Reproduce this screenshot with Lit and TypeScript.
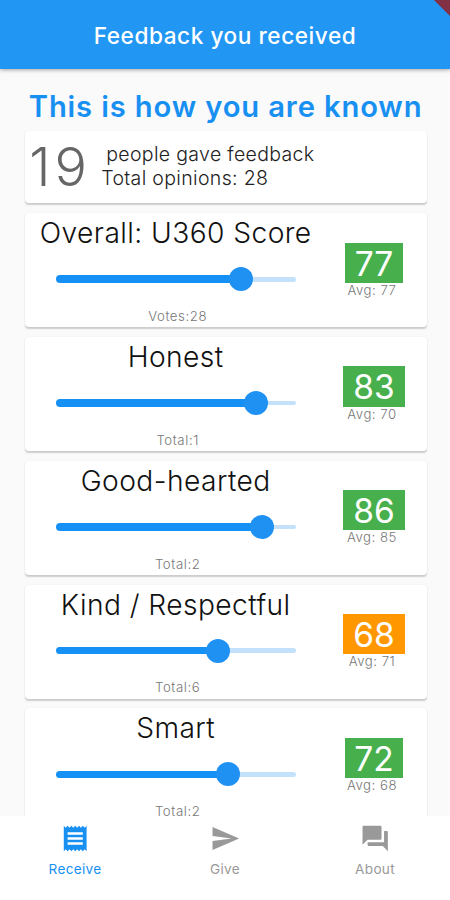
import { LitElement, html, css, svg } from "lit";
import { customElement, property } from "lit/decorators.js";
import { styleMap } from "lit/directives/style-map.js";

interface Score {
  name: string;
  value: number;
  pos: number;
  avg: number;
  votes: string;
  badge: number;
  color: string;
}

const GREEN = "#47af4c";
const ORANGE = "#ff9800";

const scores: Score[] = [
  { name: "Overall: U360 Score", value: 77, pos: 77, avg: 77, votes: "Votes:28", badge: 57.5, color: GREEN },
  { name: "Honest", value: 83, pos: 83.2, avg: 70, votes: "Total:1", badge: 61.7, color: GREEN },
  { name: "Good-hearted", value: 86, pos: 85.8, avg: 85, votes: "Total:2", badge: 61.7, color: GREEN },
  { name: "Kind / Respectful", value: 68, pos: 67.4, avg: 71, votes: "Total:6", badge: 61.7, color: ORANGE },
  { name: "Smart", value: 72, pos: 71.7, avg: 68, votes: "Total:2", badge: 58.3, color: GREEN },
];

@customElement("score-card")
export class ScoreCard extends LitElement {
  @property({ attribute: false }) score!: Score;

  static styles = css`
    :host {
      display: flex;
      flex: none;
      height: 114px;
      background: #fff;
      border-radius: 4px;
      box-shadow: 0 1.2px 1.5px rgba(0, 0, 0, 0.18), 0 0 1.5px rgba(0, 0, 0, 0.05);
      font-family: Inter, "Liberation Sans", sans-serif;
    }
    .main {
      width: 303px;
      display: flex;
      flex-direction: column;
      align-items: center;
    }
    .name {
      height: 40px;
      margin-right: 1px;
      line-height: 41px;
      font-size: 28.2px;
      font-weight: 330;
      letter-spacing: 0.42px;
      color: #111;
      white-space: nowrap;
    }
    .slider {
      display: flex;
      align-items: center;
      width: 240px;
      height: 24px;
      margin-top: 14px;
    }
    .active {
      height: 7.6px;
      border-radius: 4px 0 0 4px;
      background: #1590f5;
    }
    .thumb {
      flex: none;
      width: 24px;
      height: 24px;
      margin: 0 -12px;
      border-radius: 50%;
      background: #1f91f3;
      z-index: 1;
    }
    .rest {
      flex: 1;
      height: 4.6px;
      border-radius: 0 3px 3px 0;
      background: #c3e1fb;
    }
    .votes {
      margin: 16.7px 0 0 3px;
      line-height: 16px;
      font-size: 13.2px;
      font-weight: 300;
      letter-spacing: 0.6px;
      color: #777;
    }
    .side {
      width: 92.6px;
      display: flex;
      flex-direction: column;
      align-items: center;
      padding-top: 29.3px;
    }
    .badge {
      height: 40.2px;
      line-height: 42px;
      text-align: center;
      font-size: 33.5px;
      color: #fff;
    }
    .avg {
      margin-right: 4px;
      line-height: 15.5px;
      font-size: 13.2px;
      font-weight: 300;
      letter-spacing: 0.5px;
      color: #777;
      white-space: nowrap;
    }
  `;

  render() {
    const s = this.score;
    return html`
      <div class="main">
        <div class="name">${s.name}</div>
        <div class="slider">
          <div class="active" style=${styleMap({ width: `${s.pos}%` })}></div>
          <div class="thumb"></div>
          <div class="rest"></div>
        </div>
        <div class="votes">${s.votes}</div>
      </div>
      <div class="side">
        <div class="badge" style=${styleMap({ width: `${s.badge}px`, background: s.color })}>${s.value}</div>
        <div class="avg">Avg: ${s.avg}</div>
      </div>
    `;
  }
}

const tabs = [
  {
    label: "Receive",
    active: true,
    icon: svg`<path d="M18 17H6v-2h12v2zm0-4H6v-2h12v2zm0-4H6V7h12v2zM3 22l1.5-1.5L6 22l1.5-1.5L9 22l1.5-1.5L12 22l1.5-1.5L15 22l1.5-1.5L18 22l1.5-1.5L21 22V2l-1.5 1.5L18 2l-1.5 1.5L15 2l-1.5 1.5L12 2l-1.5 1.5L9 2 7.5 3.5 6 2 4.5 3.5 3 2v20z"/>`,
  },
  { label: "Give", active: false, icon: svg`<path d="M2.01 21 23 12 2.01 3 2 10l15 2-15 2z"/>` },
  {
    label: "About",
    active: false,
    icon: svg`<path d="M21 6h-2v9H6v2c0 .55.45 1 1 1h11l4 4V7c0-.55-.45-1-1-1zm-4 6V3c0-.55-.45-1-1-1H3c-.55 0-1 .45-1 1v14l4-4h10c.55 0 1-.45 1-1z"/>`,
  },
];

@customElement("app-root")
export class AppRoot extends LitElement {
  static styles = css`
    :host {
      display: flex;
      flex-direction: column;
      position: relative;
      height: 900px;
      overflow: hidden;
      background: #fafafa;
      font-family: Inter, "Liberation Sans", sans-serif;
    }
    .bar {
      flex: none;
      height: 69px;
      line-height: 71px;
      background: #2296f3;
      box-shadow: 0 1px 4px rgba(0, 0, 0, 0.35);
      text-align: center;
      color: #fff;
      font-size: 22.6px;
      font-weight: 550;
      letter-spacing: 0.55px;
      white-space: nowrap;
      z-index: 1;
    }
    .ribbon {
      position: absolute;
      top: 0;
      right: 0;
      width: 24px;
      height: 24px;
      z-index: 2;
    }
    .content {
      flex: 1;
      min-height: 0;
      overflow: hidden;
      display: flex;
      flex-direction: column;
      gap: 9.8px;
      padding: 0 23.5px 0 24.7px;
    }
    .title {
      flex: none;
      margin: 0 -10px -9.8px;
      height: 61.8px;
      line-height: 75px;
      text-align: center;
      color: #1890f2;
      font-size: 29.2px;
      font-weight: 600;
      letter-spacing: 0.85px;
      white-space: nowrap;
    }
    .summary {
      flex: none;
      display: flex;
      height: 72.7px;
      background: #fff;
      border-radius: 4px;
      box-shadow: 0 1.2px 1.5px rgba(0, 0, 0, 0.18), 0 0 1.5px rgba(0, 0, 0, 0.05);
    }
    .count {
      width: 76.5px;
      padding-left: 4.5px;
      box-sizing: border-box;
      line-height: 72px;
      font-size: 54px;
      font-weight: 350;
      letter-spacing: 4px;
      color: #666;
    }
    .lines {
      padding-top: 11.7px;
      font-size: 19.5px;
      line-height: 24px;
      font-weight: 330;
      letter-spacing: 0.34px;
      color: #222;
      white-space: pre;
    }
    .people {
      padding-left: 5px;
    }
    .tabs {
      flex: none;
      display: flex;
      height: 84px;
      background: #fff;
    }
    .tab {
      flex: 1;
      display: flex;
      flex-direction: column;
      align-items: center;
      padding-top: 7px;
      color: #999;
      font-size: 13.6px;
      line-height: 20px;
      letter-spacing: 0.3px;
    }
    .tab svg {
      width: 30.4px;
      height: 31px;
      fill: currentColor;
    }
    .tab span {
      margin-top: 4.5px;
    }
    .on {
      color: #1890f2;
    }
  `;

  render() {
    return html`
      <div class="bar">Feedback you received</div>
      <svg class="ribbon" viewBox="0 0 24 24">
        <defs>
          <filter id="s" x="-30%" y="-30%" width="160%" height="160%"><feGaussianBlur stdDeviation="1.8" /></filter>
        </defs>
        <path d="M7 -4 24 13V-4z" fill="#000" opacity=".4" filter="url(#s)" />
        <path d="M8 0 24 16V0z" fill="#823144" />
      </svg>
      <div class="content">
        <div class="title">This is how you are known</div>
        <div class="summary">
          <div class="count">19</div>
          <div class="lines"><div class="people">people gave feedback</div><div class="opinions">Total opinions: 28</div></div>
        </div>
        ${scores.map((s) => html`<score-card .score=${s}></score-card>`)}
      </div>
      <div class="tabs">
        ${tabs.map(
          (t) => html`<div class="tab ${t.active ? "on" : ""}">
            <svg viewBox="0 0 24 24">${t.icon}</svg><span>${t.label}</span>
          </div>`
        )}
      </div>
    `;
  }
}
